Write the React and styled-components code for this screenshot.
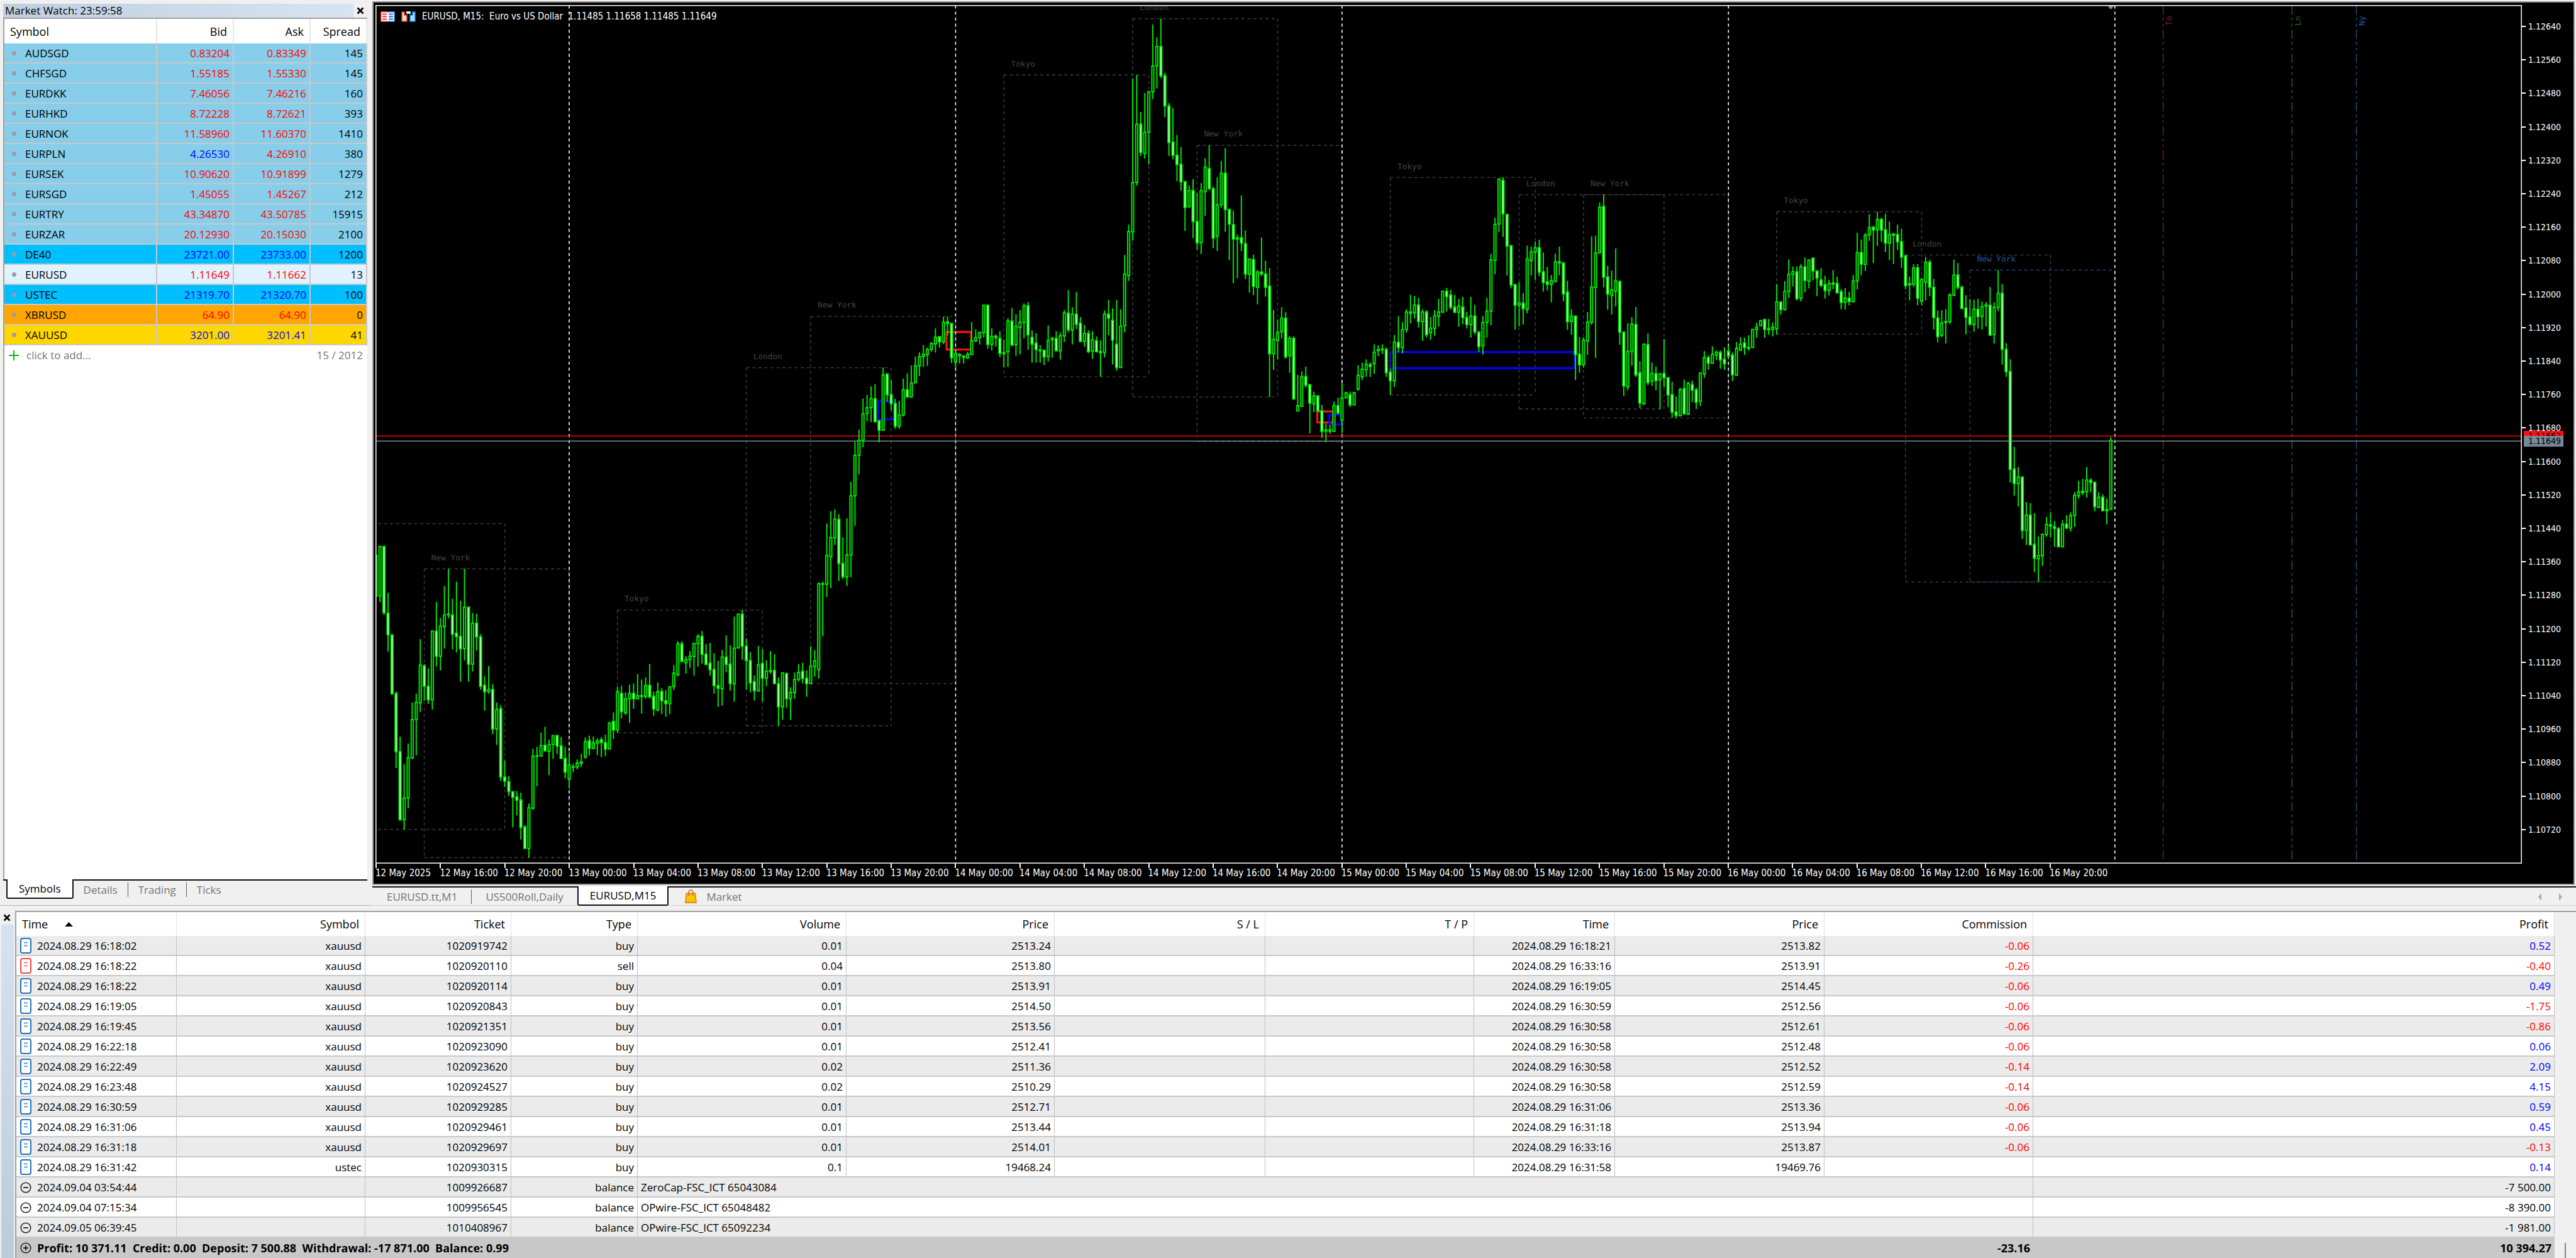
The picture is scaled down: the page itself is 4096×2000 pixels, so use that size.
import React from "react";
import styled, { createGlobalStyle } from "styled-components";

const GlobalStyle = createGlobalStyle`
  * {
    box-sizing: border-box;
  }

  body {
    margin: 0;
    background: #f0f0f0;
    color: #000;
    font-family: "Open Sans", "Noto Sans", sans-serif;
    font-size: 17px;
  }

  button {
    font: inherit;
    color: inherit;
    background: none;
    border: 0;
    padding: 0;
  }
`;

const RED = "#ff0000";
const BLUE = "#0000ff";

/* ---------- data ---------- */

const SKY = "#87ceeb";
const DEEP_SKY = "#00bfff";

const quotes = [
  ["AUDSGD", "0.83204", "0.83349", "145", SKY, RED, RED],
  ["CHFSGD", "1.55185", "1.55330", "145", SKY, RED, RED],
  ["EURDKK", "7.46056", "7.46216", "160", SKY, RED, RED],
  ["EURHKD", "8.72228", "8.72621", "393", SKY, RED, RED],
  ["EURNOK", "11.58960", "11.60370", "1410", SKY, RED, RED],
  ["EURPLN", "4.26530", "4.26910", "380", SKY, BLUE, RED],
  ["EURSEK", "10.90620", "10.91899", "1279", SKY, RED, RED],
  ["EURSGD", "1.45055", "1.45267", "212", SKY, RED, RED],
  ["EURTRY", "43.34870", "43.50785", "15915", SKY, RED, RED],
  ["EURZAR", "20.12930", "20.15030", "2100", SKY, RED, RED],
  ["DE40", "23721.00", "23733.00", "1200", DEEP_SKY, BLUE, BLUE],
  ["EURUSD", "1.11649", "1.11662", "13", "#e1f2ff", RED, RED],
  ["USTEC", "21319.70", "21320.70", "100", DEEP_SKY, BLUE, BLUE],
  ["XBRUSD", "64.90", "64.90", "0", "#ffa500", RED, RED],
  ["XAUUSD", "3201.00", "3201.41", "41", "#ffd700", BLUE, BLUE],
];

const deals = [
  ["2024.08.29 16:18:02", "xauusd", "1020919742", "buy", "0.01", "2513.24", "2024.08.29 16:18:21", "2513.82", "-0.06", "0.52"],
  ["2024.08.29 16:18:22", "xauusd", "1020920110", "sell", "0.04", "2513.80", "2024.08.29 16:33:16", "2513.91", "-0.26", "-0.40"],
  ["2024.08.29 16:18:22", "xauusd", "1020920114", "buy", "0.01", "2513.91", "2024.08.29 16:19:05", "2514.45", "-0.06", "0.49"],
  ["2024.08.29 16:19:05", "xauusd", "1020920843", "buy", "0.01", "2514.50", "2024.08.29 16:30:59", "2512.56", "-0.06", "-1.75"],
  ["2024.08.29 16:19:45", "xauusd", "1020921351", "buy", "0.01", "2513.56", "2024.08.29 16:30:58", "2512.61", "-0.06", "-0.86"],
  ["2024.08.29 16:22:18", "xauusd", "1020923090", "buy", "0.01", "2512.41", "2024.08.29 16:30:58", "2512.48", "-0.06", "0.06"],
  ["2024.08.29 16:22:49", "xauusd", "1020923620", "buy", "0.02", "2511.36", "2024.08.29 16:30:58", "2512.52", "-0.14", "2.09"],
  ["2024.08.29 16:23:48", "xauusd", "1020924527", "buy", "0.02", "2510.29", "2024.08.29 16:30:58", "2512.59", "-0.14", "4.15"],
  ["2024.08.29 16:30:59", "xauusd", "1020929285", "buy", "0.01", "2512.71", "2024.08.29 16:31:06", "2513.36", "-0.06", "0.59"],
  ["2024.08.29 16:31:06", "xauusd", "1020929461", "buy", "0.01", "2513.44", "2024.08.29 16:31:18", "2513.94", "-0.06", "0.45"],
  ["2024.08.29 16:31:18", "xauusd", "1020929697", "buy", "0.01", "2514.01", "2024.08.29 16:33:16", "2513.87", "-0.06", "-0.13"],
  ["2024.08.29 16:31:42", "ustec", "1020930315", "buy", "0.1", "19468.24", "2024.08.29 16:31:58", "19469.76", "", "0.14"],
];

const balances = [
  ["2024.09.04 03:54:44", "1009926687", "ZeroCap-FSC_ICT 65043084", "-7 500.00"],
  ["2024.09.04 07:15:34", "1009956545", "OPwire-FSC_ICT 65048482", "-8 390.00"],
  ["2024.09.05 06:39:45", "1010408967", "OPwire-FSC_ICT 65092234", "-1 981.00"],
];

/* Each bar is "direction high bodyTop bodyBottom low", offsets are divided
   by the block's unit and added to its base. */
const barBlocks = [
  {
    base: 1000,
    unit: 2.063,
    bars: `u 215 215 382 382,u 178 178 382 407,d 178 178 450 460,d 368 452 541 610,d 541 541 782 787,d 773 782 1020 1087,
d 958 1020 1299 1303,u 1070 1210 1299 1340,u 987 1045 1210 1252,u 818 888 1046 1050,u 782 818 888 1035,u 558 665 820 857,
d 661 668 752 811,d 678 752 807 824,u 525 525 807 848,d 405 525 629 671,u 471 505 629 687,u 340 459 507 597,
u 269 456 459 473,d 393 459 538 601,d 323 534 548 613,d 401 547 598 733,u 269 427 597 646,d 427 427 661 733,
u 451 493 661 691,d 455 493 549 605,d 538 549 752 766,d 711 748 774 852,u 669 765 774 782,d 743 765 927 948,
u 818 847 927 992,d 829 844 1124 1140,d 1057 1124 1141 1165,d 1120 1143 1184 1202,d 1184 1184 1207 1331,d 1182 1205 1219 1281,
d 1188 1218 1331 1380,d 1321 1329 1417 1417,u 1232 1250 1417 1455,u 1008 1038 1252 1258,u 1000 1037 1039 1162,u 942 995 1038 1038,
d 918 994 1017 1017,u 970 991 1018 1116,u 954 954 991 1050,d 950 954 997 1030,d 960 996 1048 1048,d 1000 1048 1104 1130,
u 1023 1075 1133 1170,u 1070 1082 1084 1104,u 1052 1066 1083 1092,u 1029 1062 1068 1083,u 962 979 1042 1049,d 954 975 1006 1035,
u 958 983 1007 1008,u 966 976 985 1034,d 960 971 983 1042,d 950 983 1009 1038,u 898 902 1009 1010,d 859 896 931 968,
u 753 773 931 943,d 749 781 856 884,u 777 803 861 870,u 745 781 803 902,d 740 781 803 844,u 702 790 803 804,
u 724 790 794 864,u 715 748 794 804,d 660 748 795 802,d 773 793 845 873,u 736 773 849 855,d 760 773 811 866,
d 767 811 823 877,u 752 754 823 866,u 665 698 753 767,u 567 578 704 711,d 567 578 650 650,u 628 642 655 700,
u 608 629 642 676,u 574 576 630 708,u 538 547 577 671,d 525 547 621 659,d 579 620 662 666,d 574 657 684 708,
d 616 683 749 782,d 648 749 760 836,u 603 632 762 831,d 543 632 662 695,d 584 661 741 770,u 466 596 741 815,
u 455 456 594 598,d 438 456 588 643,d 556 587 646 765,d 612 646 738 777,d 707 733 770 810,u 587 664 771 774,
d 599 658 719 815,u 645 690 719 751,d 608 687 691 701,d 620 687 741 741,d 715 741 836 914,u 695 697 836 889,
d 699 699 803 840,u 756 777 803 889,u 695 724 778 803,u 661 695 724 732,d 655 690 720 740,d 686 719 741 795,
u 588 669 741 741,u 604 648 671 712,u 327 331 684 720,d 323 331 334 547,u 84 215 333 386,u 34 141 220 349,
u 27 67 143 172,d 46 67 248 320,d 141 248 303 312,u 63 212 303 340`,
  },
  {
    base: 500,
    unit: 1.742,
    bars: `u 798 846 1051 1128,u 659 706 846 950,u 617 654 706 772,u 509 562 654 678,u 496 541 561 587,u 467 510 540 591,
d 460 510 590 591,d 584 586 619 661,u 402 427 619 620,d 424 424 496 520,d 444 496 527 551,d 510 527 605 614,
u 517 566 605 614,u 440 479 566 572,d 422 479 504 506,u 395 455 504 506,u 364 396 455 456,u 349 364 396 431,
u 324 356 364 400,u 333 339 357 396,u 314 318 339 347,u 266 297 320 350,d 295 295 313 333,u 226 245 313 321,
d 225 244 249 291,d 249 249 368 386,u 343 353 382 401,d 352 357 361 388,d 358 363 367 388,u 347 356 368 373,
u 244 309 357 358,u 269 298 309 314,u 280 280 298 322,u 185 186 281 298,d 186 186 322 337,u 266 294 322 343,
d 287 294 299 329,d 276 301 353 366,d 305 350 354 401,u 231 241 347 400,d 196 241 324 328,u 217 259 323 362,
u 203 245 263 357,u 180 188 246 301,d 175 188 289 340,d 273 297 321 385,d 283 317 340 385,d 324 341 344 385,
d 342 342 365 394,u 256 308 364 381,u 296 300 306 368,d 276 301 344 345,u 280 292 344 374,u 203 213 292 313,
d 134 213 271 280,u 193 217 272 322,d 140 217 252 268,d 227 248 311 315,u 254 284 311 330,d 273 284 347 352,
u 276 306 345 371,d 294 309 347 350,d 308 346 351 434,u 204 217 350 367,d 168 217 231 290,d 197 238 307 391,
d 168 321 402 413,u 200 259 402 403,u 12 78 257 280`,
  },
  {
    base: 0,
    unit: 1.742,
    bars: `u 778 802 954 973,u 272 632 803 834,u 259 430 632 643,d 388 430 528 540,u 322 458 531 549,u 315 318 458 570,
u 85 228 318 343,u 129 161 228 306,d 64 161 263 270,d 252 262 367 406,d 357 367 494 540,d 374 492 538 552,
d 467 538 570 627,d 509 569 630 660,d 628 629 719 800,u 642 660 716 718,d 620 660 767 825,d 667 767 841 865,
u 634 660 841 880,u 548 579 664 747,d 503 584 654 657,d 646 654 825 860,u 614 709 818 869,u 558 600 709 719,
d 513 600 726 803,d 722 726 776 901,d 729 778 828 981,d 812 824 828 964,d 677 823 842 869,d 798 844 949 967,
u 897 897 950 1013,d 882 899 992 1022,u 935 942 995 1054,d 823 942 949 956,d 903 949 995 1027,d 928 991 1225 1375,
u 1074 1175 1225 1281,u 1106 1151 1179 1245,u 1064 1102 1149 1172,d 1081 1102 1236 1242,u 1164 1172 1232 1291,d 1165 1172 1382 1382,
u 1298 1405 1423 1424,u 1286 1304 1407 1410,d 1270 1304 1334 1343,d 1332 1332 1396 1501,u 1356 1371 1399 1428,d 1371 1371 1424 1425,
d 1402 1423 1494 1517,d 1467 1489 1493 1531,d 1472 1489 1493 1503,u 1391 1405 1494 1495,d 1377 1405 1431 1435,u 1326 1378 1455 1500,
u 1357 1361 1378 1379,d 1356 1367 1402 1410,u 1357 1360 1402 1403`,
  },
  {
    base: 300,
    unit: 2.613,
    bars: `u 1114 1166 1237 1246,u 1100 1134 1174 1190,u 1083 1109 1137 1174,d 1099 1110 1120 1174,u 1005 1046 1105 1159,d 1010 1032 1037 1066,
d 1005 1030 1034 1055,d 1021 1032 1152 1174,d 1131 1150 1194 1268,u 957 994 1194 1227,d 858 994 1021 1047,u 890 930 1021 1052,
u 823 837 928 944,d 748 837 844 896,u 754 801 842 871,d 764 801 886 918,u 823 837 887 986,d 828 837 955 969,
u 863 921 944 981,u 827 857 922 960,u 769 837 860 913,u 728 729 838 838,d 712 729 757 835,d 722 748 812 824,
d 748 811 838 844,u 769 806 838 913,d 758 811 866 900,d 837 865 902 923,u 758 858 902 970,d 800 858 940 954,
d 936 942 1017 1045,u 858 891 1012 1058,u 763 832 891 970,u 535 566 833 907,u 347 382 569 641,u 142 147 380 421,
d 137 153 327 447,d 330 330 495 647,d 492 492 697 714,d 690 695 802 928,u 682 790 802 912,d 738 791 820 902,
u 492 561 824 844,u 497 524 570 647,u 471 503 527 671,d 461 503 630 651,d 528 628 683 731,d 602 680 693 725,
u 645 674 693 787,u 534 576 679 683,d 497 576 582 646,d 580 582 744 782,d 675 733 887 929,u 822 858 886 955,
d 858 858 1058 1190,d 967 1057 1111 1152,u 968 983 1110 1126,u 837 890 987 1060,u 444 707 891 902,u 440 530 709 1076,
u 268 293 530 532,d 227 288 656 709,d 597 655 744 825,u 622 722 751 850,u 507 675 730 808,d 671 680 942 1007,
d 937 942 1221 1273,u 895 1041 1226 1243,u 864 900 1043 1116,d 811 902 1164 1175,d 1092 1152 1310 1337,u 999 1005 1314 1320,
d 947 1006 1204 1217,u 1099 1156 1196 1221,d 1120 1157 1194 1243,u 1155 1159 1189 1341,d 978 1156 1178 1227,d 1175 1178 1268 1331,
d 1199 1266 1358 1387,d 1276 1356 1374 1388,u 1230 1241 1376 1379,d 1188 1235 1366 1371,u 1199 1208 1367 1373,d 1193 1214 1243 1304,
d 1230 1241 1306 1341,u 1151 1154 1299 1326,u 1040 1074 1158 1178,d 1062 1074 1103 1137,u 1015 1057 1103 1105,u 1037 1046 1060 1086,
d 1036 1047 1086 1132,d 1021 1083 1106 1137,d 1012 1041 1065 1073`,
  },
  {
    base: 350,
    unit: 1.845,
    bars: `d 647 657 729 752,u 609 632 730 733,u 591 617 639 641,d 593 612 629 656,d 584 628 632 641,u 560 563 629 630,
u 538 555 563 593,u 528 530 549 550,d 525 526 563 593,d 524 560 564 582,u 537 554 563 588,u 396 462 560 582,
d 459 462 490 508,u 385 423 490 493,u 306 360 424 448,u 332 351 361 405,d 332 351 450 456,u 323 333 448 460,
d 299 333 383 427,u 305 308 386 412,d 299 301 348 382,d 347 348 375 441,d 338 381 401 408,d 366 398 420 449,
u 381 394 420 438,d 345 392 397 415,d 369 394 428 432,d 415 424 464 489,u 411 447 463 490,d 425 448 460 475,
u 363 385 461 464,u 208 281 385 416,d 233 281 323 364,u 209 216 324 348,u 140 189 216 238,d 183 188 198 319,
u 131 159 197 256,d 153 159 198 241,d 138 197 246 279,u 167 215 246 309,d 208 213 217 323,d 178 215 241 271,
d 193 241 297 337,d 288 293 402 415,d 368 395 399 456,u 323 337 397 408,d 323 337 448 474,u 374 380 459 474,
u 297 316 390 456,d 307 316 408 441,d 377 408 519 563,d 493 521 589 610,u 492 539 584 591,d 488 533 537 614,
u 430 436 534 544,u 307 363 437 440,d 319 363 408 416,d 401 408 486 488,d 437 484 518 581,d 451 517 543 549,
u 454 488 545 571,d 451 489 516 560,u 460 479 515 563,d 462 473 477 552,d 407 474 584 585,u 463 481 581 614,
u 345 430 482 495,d 396 430 636 692,d 613 636 718 737,d 672 717 1076 1124,d 993 1075 1128 1172,u 1067 1104 1128 1212,
d 1104 1104 1300 1331,u 1196 1244 1300 1353,d 1200 1244 1353 1354,d 1237 1351 1402 1453,u 1322 1392 1404 1489,u 1311 1314 1393 1430,
u 1251 1278 1315 1323,d 1233 1279 1284 1326,d 1265 1286 1293 1360,d 1288 1293 1360 1361,u 1262 1278 1360 1361,d 1244 1277 1291 1295,
u 1233 1245 1291 1304,u 1159 1171 1245 1287,u 1118 1159 1172 1183,d 1111 1156 1161 1170,u 1067 1115 1158 1179,d 1108 1116 1124 1160,
d 1123 1123 1213 1230,u 1160 1178 1216 1217,d 1167 1178 1228 1230,d 1182 1223 1228 1278,u 957 970 1222 1224`,
  },
];

const bars = barBlocks.flatMap(({ base, unit, bars: text }) =>
  text.split(",").map((item) => {
    const [dir, ...levels] = item.trim().split(" ");
    const [high, top, bottom, low] = levels.map((v) => base + Number(v) / unit);
    return { up: dir === "u", high, top, bottom, low };
  })
);

const CHART_LEFT = 747;
const CHART_TOP = 11;
const CHART_RIGHT = 5011;
const CHART_BOTTOM = 1716;
const BAR_STEP = 8;
const barX = (i) => CHART_LEFT + i * BAR_STEP;

/* name, first bar, last bar, high, low */
const sessions = [
  ["", -4, 32, 1041, 1649],
  ["New York", 12, 48, 1131, 1705],
  ["Tokyo", 60, 96, 1213, 1457],
  ["London", 92, 128, 731, 1443],
  ["New York", 108, 144, 629, 1359],
  ["Tokyo", 156, 192, 149, 749],
  ["London", 188, 224, 37, 789],
  ["New York", 204, 240, 289, 878],
  ["Tokyo", 252, 288, 353, 785],
  ["London", 284, 320, 387, 813],
  ["New York", 300, 336, 387, 831],
  ["Tokyo", 348, 384, 421, 664],
  ["London", 380, 416, 507, 1157],
  ["New York", 396, 432, 537, 1157, true],
];

const zones = [
  [1881, 660, 49, 35, "#ff1010"],
  [1745, 798, 32, 36, "#0000ff"],
  [2618, 818, 31, 22, "#ff1010"],
  [2642, 825, 24, 19, "#0000ff"],
  [2763, 700, 366, 32, "#0000ff"],
];

const openings = [
  ["To", 4299, "#5e2222", "#7a2424"],
  ["Ln", 4555, "#225c14", "#28701a"],
  ["Ny", 4683, "#1f4470", "#2457a0"],
];

const dayBars = [48, 144, 240, 336, 432];

const hours = ["00:00", "04:00", "08:00", "12:00", "16:00", "20:00"];
const timeLabels = [
  "12 May 2025",
  "12 May 16:00",
  "12 May 20:00",
  ...[13, 14, 15, 16].flatMap((day) => hours.map((h) => `${day} May ${h}`)),
];

const priceLabels = Array.from({ length: 25 }, (_, i) =>
  ((112640 - i * 80) / 100000).toFixed(5)
);

/* ---------- frame ---------- */

const Page = styled.div`
  min-height: 100vh;
  display: flex;
  flex-direction: column;
`;

const Workspace = styled.div`
  flex: 1;
  display: grid;
  grid-template-columns: 592px minmax(0, 1fr);
  padding-bottom: 8px;
`;

/* ---------- market watch ---------- */

const WatchPanel = styled.section`
  display: flex;
  flex-direction: column;
  padding: 6px 8px 0 5px;
  border-bottom: 1px solid #b4b4b4;
`;

const WatchTitle = styled.header`
  display: flex;
  justify-content: space-between;
  height: 22px;
  line-height: 21px;
  padding-left: 3px;
  background: linear-gradient(90deg, #bfcfe0, #d8e4f1);
`;

const CloseButton = styled.button`
  display: flex;
  align-items: center;
  justify-content: center;
  width: 22px;
  height: 22px;
  background: #f0f0f0;
`;

const WatchBody = styled.div`
  flex: 1;
  background: #fff;
  border-top: 2px solid #a0a0a0;
  border-left: 2px solid #a0a0a0;
`;

const QuoteTable = styled.table`
  width: 100%;
  table-layout: fixed;
  border-collapse: separate;
  border-spacing: 0;
`;

const QuoteHead = styled.th`
  height: 39px;
  padding: 0 9px;
  font-size: 18px;
  font-weight: 400;
  text-align: ${(p) => (p.$left ? "left" : "right")};
  border-right: 2px solid #e8e8e8;
`;

const QuoteRow = styled.tr`
  background: ${(p) => p.$bg};
`;

const QuoteCell = styled.td`
  height: 32px;
  padding: 1px 5px 0 0;
  line-height: 28px;
  text-align: right;
  color: ${(p) => p.$color || "#000"};
  border-right: 2px solid #c8c8c8;
  border-bottom: 2px solid #c8c8c8;
`;

const SymbolCell = styled(QuoteCell)`
  padding-left: 12px;
  text-align: left;
`;

const Dot = styled.span`
  display: inline-block;
  width: 7px;
  height: 7px;
  margin-right: 14px;
  border-radius: 50%;
  background: #9c9ca4;
  vertical-align: 3px;
`;

const AddRow = styled.div`
  display: flex;
  justify-content: space-between;
  height: 32px;
  line-height: 32px;
  padding: 0 7px 0 6px;
  color: #757575;
`;

const AddButton = styled.button`
  display: flex;
  align-items: center;
  gap: 11px;
`;

const WatchTabs = styled.div`
  display: flex;
  align-items: flex-start;
  height: 41px;
  padding-left: 5px;
  border-top: 2px solid #111;
`;

const Tab = styled.button`
  display: flex;
  align-items: center;
  height: 29px;
  padding: 0 16px;
  color: #757575;

  & + &::before {
    content: "";
    width: 1px;
    height: 23px;
    margin: 0 16px 0 -16px;
    background: #606060;
  }
`;

const ActiveTab = styled.button`
  height: 31px;
  margin-top: -2px;
  padding: 0 18px;
  color: #000;
  background: #fff;
  border: solid #111;
  border-width: 0 2px 2px;
  border-radius: 0 0 3px 3px;
`;

/* ---------- chart ---------- */

const ChartColumn = styled.section`
  display: flex;
  flex-direction: column;
  min-width: 0;
  border-bottom: 1px solid #cfcfcf;
`;

const ChartWindow = styled.div`
  flex: 1;
  display: grid;
  grid-template-columns: minmax(0, 1fr) 82px;
  grid-template-rows: minmax(0, 1fr) 32px;
  margin: 2px 2px 0 0;
  padding: 4px 0 0 3px;
  background: #000;
  border: 2px solid #9a9a9a;
  color: #fff;
  font-family: "DejaVu Sans Condensed", "DejaVu Sans", sans-serif;
  font-size: 14px;
`;

const Plot = styled.div`
  position: relative;
  min-height: 0;
`;

const PlotSvg = styled.svg`
  position: absolute;
  inset: 0;
  width: 100%;
  height: 100%;
`;

const ChartTitle = styled.div`
  position: absolute;
  top: 9px;
  left: 8px;
  display: flex;
  align-items: center;
  gap: 10px;
  font-size: 15px;
  line-height: 18px;
  white-space: pre;
`;

const PriceAxis = styled.div`
  position: relative;
  display: flex;
  flex-direction: column;
  justify-content: space-between;
  padding: 26px 0 46px;
`;

const PriceLabel = styled.div`
  display: flex;
  align-items: center;
  gap: 4px;
  height: 16px;

  &::before {
    content: "";
    width: 6px;
    height: 2px;
    background: #fff;
  }
`;

const PriceTag = styled.div`
  position: absolute;
  left: 3px;
  top: ${(p) => p.$top};
  width: 63px;
  height: 17px;
  padding-left: 7px;
  line-height: 17px;
  color: #000;
  background: ${(p) => p.$bg};
`;

const TimeAxis = styled.div`
  display: grid;
  grid-template-columns: repeat(27, 3%);
`;

const TimeLabel = styled.div`
  white-space: nowrap;
  font-size: 15px;
  line-height: 16px;

  &::before {
    content: "";
    display: block;
    width: 2px;
    height: 7px;
    background: #fff;
  }
`;

const ChartTabs = styled.nav`
  display: flex;
  align-items: flex-start;
  height: 30px;
  margin-top: 2px;
  padding-left: 1px;
  border-top: 2px solid #111;
`;

const ChartTab = styled(Tab)`
  height: 28px;
  padding: 0 22px;

  & + &::before {
    margin: 0 22px 0 -22px;
  }
`;

const MarketTab = styled(Tab)`
  gap: 15px;
  height: 28px;
  padding: 0 26px;
`;

const TabArrows = styled.div`
  display: flex;
  align-items: center;
  gap: 28px;
  height: 28px;
  margin-left: auto;
  padding-right: 22px;
`;

/* ---------- toolbox ---------- */

const Toolbox = styled.section`
  display: grid;
  grid-template-columns: 24px minmax(0, 1fr) 34px;
`;

const ToolboxHandle = styled.div`
  display: flex;
  flex-direction: column;
`;

const HandleStrip = styled.div`
  flex: 1;
  margin: 0 2px;
  background: linear-gradient(#d5e3f0, #bccbda);
`;

const ScrollTrack = styled.div`
  display: flex;
  align-items: flex-end;
  justify-content: center;
  border-top: 2px solid #a0a0a0;
`;

const ScrollThumb = styled.div`
  width: 2px;
  height: 24px;
  background: #858585;
`;

const HistoryTable = styled.table`
  width: 100%;
  table-layout: fixed;
  border-collapse: separate;
  border-spacing: 0;
  background: #fff;
  border-top: 2px solid #a0a0a0;
  border-left: 2px solid #a0a0a0;
`;

const HistoryHead = styled.th`
  height: 38px;
  padding: 0 9px;
  font-size: 18px;
  font-weight: 400;
  text-align: ${(p) => (p.$left ? "left" : "right")};
  border-right: 1px solid #e0e0e0;
`;

const SortButton = styled.button`
  display: flex;
  align-items: center;
  gap: 27px;
`;

const HistoryRow = styled.tr`
  &:nth-child(odd) {
    background: #ebebeb;
  }
`;

const HistoryCell = styled.td`
  height: 32px;
  padding: 1px 5px 0;
  line-height: 28px;
  text-align: ${(p) => (p.$left ? "left" : "right")};
  color: ${(p) => p.$color || "#000"};
  white-space: nowrap;
  border-right: 1px solid #c0c0c0;
  border-bottom: 2px solid #c8c8c8;
`;

const TimeCell = styled.div`
  display: flex;
  align-items: center;
  gap: 9px;
  padding-left: 1px;
`;

const TotalCell = styled.td`
  height: 32px;
  padding: 0 5px;
  text-align: ${(p) => (p.$left ? "left" : "right")};
  font-size: 18px;
  font-weight: 700;
  white-space: pre;
  background: #c8c8c8;
`;

/* ---------- drawings ---------- */

const CloseIcon = () => (
  <svg width="12" height="12" viewBox="0 0 12 12" aria-hidden="true">
    <path d="M1.5 1.5 10.5 10.5M10.5 1.5 1.5 10.5" stroke="#000" strokeWidth="2.6" />
  </svg>
);

const PlusIcon = () => (
  <svg width="18" height="18" viewBox="0 0 18 18" aria-hidden="true">
    <path d="M9 1v16M1 9h16" stroke="#10b010" strokeWidth="2" />
  </svg>
);

const DealIcon = ({ color }) => (
  <svg width="18" height="25" viewBox="0 0 18 25" aria-hidden="true">
    <rect x="1" y="1" width="16" height="23" rx="3" fill="#fff" stroke={color} strokeWidth="2" />
    <path d="M6.500 7.500h2M9.500 7.500h2M6.500 12.500h2M9.500 12.500h2" stroke={color} strokeWidth="1.800" />
  </svg>
);

const CircleIcon = ({ plus }) => (
  <svg width="18" height="18" viewBox="0 0 18 18" aria-hidden="true">
    <circle cx="9" cy="9" r="7.800" fill="none" stroke="#222" strokeWidth="1.600" />
    <path d={plus ? "M5 9h8M9 5v8" : "M5 9h8"} stroke="#222" strokeWidth="1.800" />
  </svg>
);

const BagIcon = () => (
  <svg width="19" height="22" viewBox="0 0 19 22" aria-hidden="true">
    <path d="M2.500 6.500h14l1.500 14.500H1z" fill="#ffc400" stroke="#e08a1e" strokeWidth="1.800" />
    <path d="M6 10V5a3.500 3.800 0 0 1 7 0v5" fill="none" stroke="#c9782a" strokeWidth="1.800" />
  </svg>
);

const DepthIcon = () => (
  <svg width="23" height="17" viewBox="0 0 23 17" aria-hidden="true">
    <rect width="11.500" height="17" rx="1" fill="#e33a2c" />
    <rect x="11.500" width="11.500" height="17" rx="1" fill="#1a70c4" />
    <rect x="1.500" y="1.500" width="20" height="14" fill="#fff" />
    <path d="M3 4.500h7M3 8.500h7M3 12.500h7" stroke="#e33a2c" strokeWidth="2" />
    <path d="M13 4.500h7M13 8.500h7M13 12.500h7" stroke="#1a70c4" strokeWidth="2" />
  </svg>
);

const TradeIcon = () => (
  <svg width="23" height="17" viewBox="0 0 23 17" aria-hidden="true">
    <path d="M1 1h4v5h4v10H1z" fill="#fbe0c8" stroke="#e33a2c" strokeWidth="1.600" />
    <path d="M22 1h-4v5h-4v10h8z" fill="#a8dcfb" stroke="#1a8ae4" strokeWidth="1.600" />
    <rect x="8" y="0" width="7" height="4" rx="1" fill="#f4f4f4" />
  </svg>
);

const Arrow = ({ d }) => (
  <svg width="5" height="12" viewBox="0 0 5 12" aria-hidden="true">
    <path d={d} fill="#a8a8a8" />
  </svg>
);

const PriceChart = () => (
  <PlotSvg viewBox="746 10 4266 1707" preserveAspectRatio="none" aria-label="EURUSD M15">
    <defs>
      <clipPath id="plot">
        <rect
          x={CHART_LEFT}
          y={CHART_TOP}
          width={CHART_RIGHT - CHART_LEFT}
          height={CHART_BOTTOM - CHART_TOP}
        />
      </clipPath>
    </defs>
    <g clipPath="url(#plot)">
      <g fill="none" strokeWidth="4">
        {zones.map(([x, y, w, h, color]) => (
          <rect key={x} x={x} y={y} width={w} height={h} stroke={color} />
        ))}
      </g>
      {sessions.map(([name, from, to, high, low, active]) => (
        <g key={`${name}${from}`}>
          <path
            d={`M${barX(from)} ${high}H${barX(to)}M${barX(from)} ${low}H${barX(to)}M${barX(from)} ${high}V${low}M${barX(to)} ${high}V${low}`}
            fill="none"
            stroke={active ? "#1d3e66" : "#3a3a3a"}
            strokeWidth="2"
            strokeDasharray="6 6"
          />
          <text
            x={barX(from) + 14}
            y={high - 17}
            fill={active ? "#2858a0" : "#444"}
            fontFamily="DejaVu Sans Mono, monospace"
            fontSize="16"
          >
            {name}
          </text>
        </g>
      ))}
      {openings.map(([name, x, line, text]) => (
        <g key={name}>
          <path d={`M${x} ${CHART_TOP}V${CHART_BOTTOM}`} stroke={line} strokeWidth="2" strokeDasharray="18 6 6 6 6 6" />
          <text
            transform={`translate(${x + 17} 51) rotate(-90)`}
            fill={text}
            fontFamily="DejaVu Sans Mono, monospace"
            fontSize="16"
          >
            {name}
          </text>
        </g>
      ))}
      {dayBars.map((i) => (
        <path key={i} d={`M${barX(i)} ${CHART_TOP}V${CHART_BOTTOM}`} stroke="#fff" strokeWidth="2" strokeDasharray="6 6" />
      ))}
      <path d={`M${CHART_LEFT} 867H${CHART_RIGHT}`} stroke="#f00000" strokeWidth="2" />
      <path d={`M${CHART_LEFT} 877H${CHART_RIGHT}`} stroke="#778899" strokeWidth="2" />
      <g stroke="#00ea00" strokeWidth="2.4">
        {bars.map((bar, i) => (
          <g key={i}>
            <path d={`M${barX(i)} ${bar.high}V${bar.low}`} />
            <rect
              x={barX(i) - 2}
              y={bar.top}
              width="4"
              height={Math.max(bar.bottom - bar.top, 1)}
              fill={bar.up ? "#000" : "#fff"}
            />
          </g>
        ))}
      </g>
      <path d="M4188 11h14l-7 8z" fill="#8a8a8a" />
    </g>
    <rect
      x={CHART_LEFT}
      y={CHART_TOP}
      width={CHART_RIGHT - CHART_LEFT}
      height={CHART_BOTTOM - CHART_TOP}
      fill="none"
      stroke="#f0f0f0"
      strokeWidth="2"
    />
  </PlotSvg>
);

/* ---------- panels ---------- */

const MarketWatch = () => (
  <WatchPanel>
    <WatchTitle>
      Market Watch: 23:59:58
      <CloseButton aria-label="Close">
        <CloseIcon />
      </CloseButton>
    </WatchTitle>
    <WatchBody>
      <QuoteTable>
        <colgroup>
          <col />
          <col style={{ width: 122 }} />
          <col style={{ width: 122 }} />
          <col style={{ width: 90 }} />
        </colgroup>
        <thead>
          <tr>
            <QuoteHead $left>Symbol</QuoteHead>
            <QuoteHead>Bid</QuoteHead>
            <QuoteHead>Ask</QuoteHead>
            <QuoteHead>Spread</QuoteHead>
          </tr>
        </thead>
        <tbody>
          {quotes.map(([symbol, bid, ask, spread, bg, bidColor, askColor]) => (
            <QuoteRow key={symbol} $bg={bg}>
              <SymbolCell>
                <Dot />
                {symbol}
              </SymbolCell>
              <QuoteCell $color={bidColor}>{bid}</QuoteCell>
              <QuoteCell $color={askColor}>{ask}</QuoteCell>
              <QuoteCell>{spread}</QuoteCell>
            </QuoteRow>
          ))}
        </tbody>
      </QuoteTable>
      <AddRow>
        <AddButton>
          <PlusIcon />
          click to add...
        </AddButton>
        <span>15 / 2012</span>
      </AddRow>
    </WatchBody>
    <WatchTabs>
      <ActiveTab>Symbols</ActiveTab>
      <Tab>Details</Tab>
      <Tab>Trading</Tab>
      <Tab>Ticks</Tab>
    </WatchTabs>
  </WatchPanel>
);

const ChartPanel = () => (
  <ChartColumn>
    <ChartWindow>
      <Plot>
        <PriceChart />
        <ChartTitle>
          <DepthIcon />
          <TradeIcon />
          <span>EURUSD, M15:  Euro vs US Dollar  1.11485 1.11658 1.11485 1.11649</span>
        </ChartTitle>
      </Plot>
      <PriceAxis>
        {priceLabels.map((price) => (
          <PriceLabel key={price}>{price}</PriceLabel>
        ))}
        <PriceTag $top="49.600%" $bg="#ff1010">1.11662</PriceTag>
        <PriceTag $top="50.200%" $bg="#778899">1.11649</PriceTag>
      </PriceAxis>
      <TimeAxis>
        {timeLabels.map((label) => (
          <TimeLabel key={label}>{label}</TimeLabel>
        ))}
      </TimeAxis>
    </ChartWindow>
    <ChartTabs>
      <ChartTab>EURUSD.tt,M1</ChartTab>
      <ChartTab>US500Roll,Daily</ChartTab>
      <ActiveTab>EURUSD,M15</ActiveTab>
      <MarketTab>
        <BagIcon />
        Market
      </MarketTab>
      <TabArrows>
        <button aria-label="Scroll left">
          <Arrow d="M5 0v12L0 6z" />
        </button>
        <button aria-label="Scroll right">
          <Arrow d="M0 0v12l5-6z" />
        </button>
      </TabArrows>
    </ChartTabs>
  </ChartColumn>
);

const profitColor = (value) => (value.startsWith("-") ? RED : BLUE);

const historyWidths = [255, 300, 232, 201, 332, 331, 335, 332, 224, 333, 332];

const History = () => (
  <Toolbox>
    <ToolboxHandle>
      <CloseButton aria-label="Close">
        <CloseIcon />
      </CloseButton>
      <HandleStrip />
    </ToolboxHandle>
    <HistoryTable>
      <colgroup>
        {historyWidths.map((width, i) => (
          <col key={i} style={{ width }} />
        ))}
        <col />
      </colgroup>
      <thead>
        <tr>
          <HistoryHead $left>
            <SortButton>
              Time
              <svg width="13" height="7" viewBox="0 0 13 7" aria-hidden="true">
                <path d="M6.500 0 13 7H0z" />
              </svg>
            </SortButton>
          </HistoryHead>
          {["Symbol", "Ticket", "Type", "Volume", "Price", "S / L", "T / P", "Time", "Price", "Commission", "Profit"].map(
            (name, i) => (
              <HistoryHead key={i}>{name}</HistoryHead>
            )
          )}
        </tr>
      </thead>
      <tbody>
        {deals.map(([time, symbol, ticket, type, volume, price, closeTime, closePrice, commission, profit]) => (
          <HistoryRow key={ticket}>
            <HistoryCell $left>
              <TimeCell>
                <DealIcon color={type === "sell" ? "#ee4444" : "#2272b9"} />
                {time}
              </TimeCell>
            </HistoryCell>
            <HistoryCell>{symbol}</HistoryCell>
            <HistoryCell>{ticket}</HistoryCell>
            <HistoryCell>{type}</HistoryCell>
            <HistoryCell>{volume}</HistoryCell>
            <HistoryCell>{price}</HistoryCell>
            <HistoryCell />
            <HistoryCell />
            <HistoryCell>{closeTime}</HistoryCell>
            <HistoryCell>{closePrice}</HistoryCell>
            <HistoryCell $color={RED}>{commission}</HistoryCell>
            <HistoryCell $color={profitColor(profit)}>{profit}</HistoryCell>
          </HistoryRow>
        ))}
        {balances.map(([time, ticket, comment, amount]) => (
          <HistoryRow key={ticket}>
            <HistoryCell $left>
              <TimeCell>
                <CircleIcon />
                {time}
              </TimeCell>
            </HistoryCell>
            <HistoryCell />
            <HistoryCell>{ticket}</HistoryCell>
            <HistoryCell>balance</HistoryCell>
            <HistoryCell $left colSpan={7}>
              {comment}
            </HistoryCell>
            <HistoryCell>{amount}</HistoryCell>
          </HistoryRow>
        ))}
      </tbody>
      <tfoot>
        <tr>
          <TotalCell $left colSpan={10}>
            <TimeCell>
              <CircleIcon plus />
              Profit: 10 371.11  Credit: 0.00  Deposit: 7 500.88  Withdrawal: -17 871.00  Balance: 0.99
            </TimeCell>
          </TotalCell>
          <TotalCell>-23.16</TotalCell>
          <TotalCell>10 394.27</TotalCell>
        </tr>
      </tfoot>
    </HistoryTable>
    <ScrollTrack>
      <ScrollThumb />
    </ScrollTrack>
  </Toolbox>
);

const App = () => {
  return (
    <Page>
      <GlobalStyle />
      <Workspace>
        <MarketWatch />
        <ChartPanel />
      </Workspace>
      <History />
    </Page>
  );
};

export default App;
